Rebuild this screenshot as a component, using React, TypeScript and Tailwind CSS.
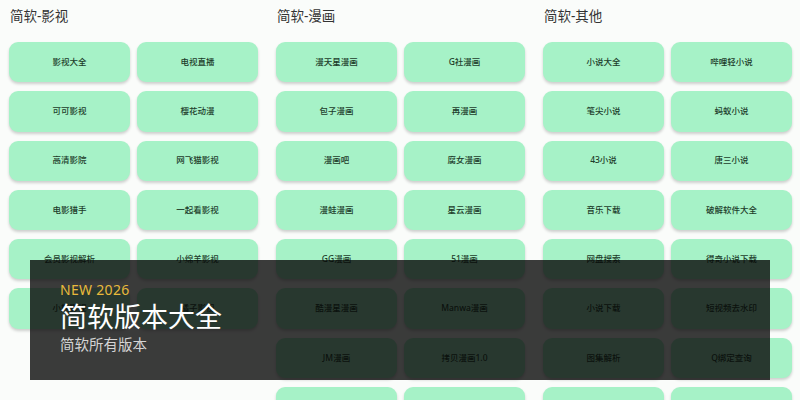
import React from "react";

interface Section {
    title: string;
    items: string[];
}

const sections: Section[] = [
    {
        title: "简软-影视",
        items: [
            "影视大全",
            "电视直播",
            "可可影视",
            "樱花动漫",
            "高清影院",
            "网飞猫影视",
            "电影猎手",
            "一起看影视",
            "会员影视解析",
            "小绵羊影视",
            "小熊影视",
            "橘子影视",
        ],
    },
    {
        title: "简软-漫画",
        items: [
            "漫天星漫画",
            "G社漫画",
            "包子漫画",
            "再漫画",
            "漫画吧",
            "腐女漫画",
            "漫蛙漫画",
            "星云漫画",
            "GG漫画",
            "51漫画",
            "酷漫星漫画",
            "Manwa漫画",
            "JM漫画",
            "拷贝漫画1.0",
            "漫画台",
            "快看漫画",
        ],
    },
    {
        title: "简软-其他",
        items: [
            "小说大全",
            "哔哩轻小说",
            "笔尖小说",
            "蚂蚁小说",
            "43小说",
            "唐三小说",
            "音乐下载",
            "破解软件大全",
            "网盘搜索",
            "得奇小说下载",
            "小说下载",
            "短视频去水印",
            "图集解析",
            "Q绑定查询",
            "壁纸大全",
            "工具箱",
        ],
    },
];

function SectionColumn({ section }: { section: Section }) {
    return (
        <div className="w-[249px] shrink-0">
            <div className="h-[42px] pl-[1px] pt-[6px] text-[13.5px] leading-[20px] text-[#333]">
                {section.title}
            </div>
            <div className="grid grid-cols-2 gap-x-[7px] gap-y-[9px]">
                {section.items.map((item, index) => (
                    <div
                        key={index}
                        className="h-[40.3px] rounded-[9px] bg-[#a6f2c7] shadow-[0_2px_3px_rgba(0,0,0,0.18)] flex items-center justify-center text-[8.5px] font-medium text-[#1d3d2b]"
                    >
                        {item}
                    </div>
                ))}
            </div>
        </div>
    );
}

export default function App() {
    return (
        <div
            className="relative h-[400px] w-[800px] overflow-hidden bg-[#fafcfa]"
            style={{ fontFamily: '"Noto Sans", "Noto Sans CJK SC", sans-serif' }}
        >
            <div className="flex gap-[18px] pl-[9px]">
                {sections.map((section, i) => (
                    <SectionColumn key={i} section={section} />
                ))}
            </div>

            <div className="absolute left-[30px] top-[260px] w-[740px] h-[120px] bg-[rgba(6,6,6,0.79)] pl-[30px] pt-[20px]">
                <div className="text-[14px] leading-[20px] text-[#e8b93c] tracking-[0.3px]">
                    NEW 2026
                </div>
                <div className="text-[27px] leading-[36px] text-white -mt-[1px]">
                    简软版本大全
                </div>
                <div className="text-[14.5px] leading-[22px] text-[#d4d4d4] mt-[-2px]">
                    简软所有版本
                </div>
            </div>
        </div>
    );
}
